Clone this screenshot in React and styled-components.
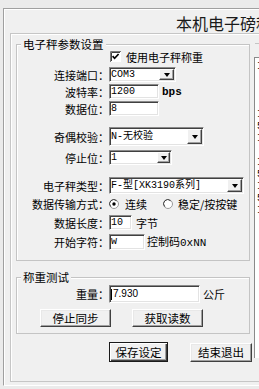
import React from 'react';
import styled, { createGlobalStyle } from 'styled-components';

const Global = createGlobalStyle`
  html, body { margin: 0; padding: 0; background: #ebebeb; }
  body {
    font-family: "Noto Sans CJK SC", "Liberation Sans", sans-serif;
    font-size: 11px;
    color: #000;
  }
  * { box-sizing: border-box; }
`;

const CJK = `"Noto Sans CJK SC", "Liberation Sans", sans-serif`;
const MONO = `"Liberation Mono", "Noto Sans CJK SC", monospace`;

const Screen = styled.div`
  width: 259px;
  height: 389px;
  overflow: hidden;
  padding: 8px 0 0 3px;
`;

const Window = styled.div`
  width: 330px;
  height: 378px;
  border-top: 1px solid #a0a0a0;
  border-left: 1px solid #a0a0a0;
  border-bottom: 1px solid #ffffff;
  border-right: 1px solid #ffffff;
  box-shadow: inset 1px 1px 0 #ffffff;
  background: #f0f0f0;
  padding: 6px 0 0 6px;
  display: flex;
  flex-direction: column;
`;

const Title = styled.div`
  height: 16px;
  line-height: 16px;
  font-size: 16px;
  padding-left: 166px;
  white-space: nowrap;
  color: #1a1a1a;
  font-family: ${CJK};
`;

const Panel = styled.div`
  margin-top: 2px;
  height: 349px;
  border: 1px solid #c6c6c6;
  box-shadow: inset 1px 1px 0 #ffffff;
  padding-left: 5px;
  display: flex;
  align-items: flex-start;
`;

const LeftCol = styled.div`
  width: 234px;
  flex: none;
  display: flex;
  flex-direction: column;
`;

const Group = styled.fieldset`
  margin: ${p => p.$mt}px 0 0 0;
  padding: 0 0 ${p => p.$pb}px 0;
  border: 1px solid #c4c4c4;
  box-shadow: inset 1px 1px 0 #ffffff;
  width: 234px;
  min-inline-size: 0;
  display: flex;
  flex-direction: column;
`;

const Legend = styled.legend`
  margin-left: 4px;
  padding: 0 2px;
  height: 14px;
  line-height: 14px;
  font-size: 11.5px;
  font-family: ${CJK};
  background: #f0f0f0;
`;

const Row = styled.div`
  display: flex;
  align-items: center;
  height: ${p => p.$h}px;
  margin-top: ${p => p.$mt}px;
  padding-left: ${p => p.$pl || 0}px;
  gap: ${p => p.$gap || 0}px;
  white-space: nowrap;
`;

const Label = styled.span`
  width: 92px;
  flex: none;
  text-align: right;
  font-size: 11px;
  line-height: 12px;
  font-family: ${CJK};
`;

const Text = styled.span`
  margin-left: ${p => p.$ml || 0}px;
  font-size: 11px;
  line-height: 12px;
  font-family: ${p => (p.$mono ? MONO : CJK)};
  font-weight: ${p => (p.$bold ? 700 : 400)};
`;

const Field = styled.div`
  width: ${p => p.$w}px;
  height: ${p => p.$h}px;
  flex: none;
  background: #ffffff;
  border-style: solid;
  border-width: 1px;
  border-color: #8a8a8a #ffffff #ffffff #8a8a8a;
  box-shadow: inset 1px 1px 0 #404040, inset -1px -1px 0 #e3e3e3;
  display: flex;
  align-items: stretch;
  overflow: hidden;
`;

const FieldText = styled.span`
  flex: 1;
  display: flex;
  align-items: center;
  padding-left: ${p => p.$pl ?? 2}px;
  font-family: ${p => (p.$sans ? `"Liberation Sans", sans-serif` : MONO)};
  font-size: 10px;
  line-height: 12px;
  white-space: nowrap;
`;

const Caret = styled.span`
  width: 1px;
  height: 11px;
  background: #000;
  margin-right: 1px;
`;

const DropBtn = styled.span`
  width: ${p => p.$w || 14}px;
  margin: 1px 1px 1px 0;
  flex: none;
  background: #f0f0f0;
  border: 1px solid;
  border-color: #ffffff #404040 #404040 #ffffff;
  box-shadow: inset -1px -1px 0 #a0a0a0;
  display: flex;
  align-items: center;
  justify-content: center;
`;

const Arrow = styled.span`
  width: 0;
  height: 0;
  border-left: 3.5px solid transparent;
  border-right: 3.5px solid transparent;
  border-top: 4px solid #000;
`;

const Button = styled.button`
  width: ${p => p.$w}px;
  height: ${p => p.$h}px;
  flex: none;
  padding: 0;
  margin: 0;
  font-family: ${CJK};
  font-size: 11.5px;
  line-height: 12px;
  color: #000;
  background: #f0f0f0;
  border: 1px solid;
  border-color: ${p => (p.$default ? '#1a1a1a' : '#ffffff #404040 #404040 #ffffff')};
  box-shadow: ${p =>
    p.$default
      ? 'inset 1px 1px 0 #ffffff, inset -1px -1px 0 #404040, inset -2px -2px 0 #a0a0a0'
      : 'inset -1px -1px 0 #a0a0a0, inset 1px 1px 0 #e8e8e8'};
`;

const RightCol = styled.div`
  margin-left: 4px;
  flex: none;
  width: 80px;
  display: flex;
  flex-direction: column;
`;

const RightRule = styled.div`
  margin: 9px 0 0 1px;
  border-top: 1px solid #c4c4c4;
`;

const ListBox = styled.div`
  margin-top: 13px;
  height: 301px;
  background: #ffffff;
  border-top: 1px solid #8a8a8a;
  border-left: 1px solid #8a8a8a;
  padding: 3px 0 0 2px;
  font-family: ${MONO};
  font-size: 10px;
  line-height: 12px;
  overflow: hidden;
  white-space: pre;
`;

const Check = () => (
  <svg width="11" height="11" viewBox="0 0 11 11" style={{ flex: 'none' }}>
    <rect x="0" y="0" width="11" height="11" fill="#fff" />
    <path d="M0.5 11V0.5H11" stroke="#7a7a7a" fill="none" />
    <path d="M1.5 10V1.5H10" stroke="#404040" fill="none" />
    <path d="M2.6 5.2L4.6 7.3L8.6 3" stroke="#000" strokeWidth="1.7" fill="none" />
  </svg>
);

const Radio = ({ on }) => (
  <svg width="10" height="10" viewBox="0 0 10 10" style={{ flex: 'none' }}>
    <circle cx="5" cy="5" r="4.5" fill="#fff" stroke="#9a9a9a" />
    <path d="M1.8 7.6A4 4 0 0 1 7.6 1.8" stroke="#404040" fill="none" />
    {on && <circle cx="5" cy="5" r="1.7" fill="#000" />}
  </svg>
);

const Select = ({ w, h, value, btn }) => (
  <Field $w={w} $h={h}>
    <FieldText $pl={1}>{value}</FieldText>
    <DropBtn $w={btn}>
      <Arrow />
    </DropBtn>
  </Field>
);

export default function App() {
  return (
    <>
      <Global />
      <Screen>
        <Window>
          <Title>本机电子磅秤参数设置</Title>
          <Panel>
            <LeftCol>
              <Group $mt={3} $pb={10}>
                <Legend>电子秤参数设置</Legend>
                <Row $h={13} $mt={-1} $pl={93}>
                  <Check />
                  <Text $ml={5}>使用电子秤称重</Text>
                </Row>
                <Row $h={15} $mt={4}>
                  <Label>连接端口：</Label>
                  <Select w={67} h={15} value="COM3" btn={15} />
                </Row>
                <Row $h={15} $mt={2}>
                  <Label>波特率：</Label>
                  <Field $w={50} $h={15}>
                    <FieldText $pl={1}>1200</FieldText>
                  </Field>
                  <Text $ml={3} $mono $bold>bps</Text>
                </Row>
                <Row $h={15} $mt={2}>
                  <Label>数据位：</Label>
                  <Field $w={50} $h={15}>
                    <FieldText $pl={1}>8</FieldText>
                  </Field>
                </Row>
                <Row $h={19} $mt={11}>
                  <Label>奇偶校验：</Label>
                  <Select w={95} h={19} value="N-无校验" btn={15} />
                </Row>
                <Row $h={15} $mt={4}>
                  <Label>停止位：</Label>
                  <Select w={63} h={15} value="1" btn={13} />
                </Row>
                <Row $h={17} $mt={12}>
                  <Label>电子秤类型：</Label>
                  <Select w={135} h={17} value="F-型[XK3190系列]" btn={15} />
                </Row>
                <Row $h={13} $mt={3}>
                  <Label>数据传输方式：</Label>
                  <Radio on />
                  <Text $ml={6}>连续</Text>
                  <span style={{ width: 16 }} />
                  <Radio />
                  <Text $ml={5}>稳定/按按键</Text>
                </Row>
                <Row $h={15} $mt={5}>
                  <Label>数据长度：</Label>
                  <Field $w={23} $h={15}>
                    <FieldText $pl={1}>10</FieldText>
                  </Field>
                  <Text $ml={4}>字节</Text>
                </Row>
                <Row $h={16} $mt={4}>
                  <Label>开始字符：</Label>
                  <Field $w={36} $h={16}>
                    <FieldText $pl={1}>w</FieldText>
                  </Field>
                  <Text $ml={2}>
                    控制码<Text $mono>0xNN</Text>
                  </Text>
                </Row>
              </Group>

              <Group $mt={9} $pb={6}>
                <Legend>称重测试</Legend>
                <Row $h={18} $mt={1}>
                  <Label>重量：</Label>
                  <Field $w={91} $h={18}>
                    <FieldText $pl={1} $sans>
                      <Caret />7.930
                    </FieldText>
                  </Field>
                  <Text $ml={3}>公斤</Text>
                </Row>
                <Row $h={18} $mt={6} $pl={23} $gap={21}>
                  <Button $w={71} $h={18}>停止同步</Button>
                  <Button $w={71} $h={18}>获取读数</Button>
                </Row>
              </Group>

              <Row $h={20} $mt={8} $pl={93} $gap={22}>
                <Button $w={59} $h={20} $default>保存设定</Button>
                <Button $w={62} $h={19}>结束退出</Button>
              </Row>
            </LeftCol>

            <RightCol>
              <RightRule />
              <ListBox>
                {'I  1\n\n\n\nI  5\n5  1\nI  2\n\nI  3\n5  2\nI  4\n5  3\nI  5\n'}
              </ListBox>
            </RightCol>
          </Panel>
        </Window>
      </Screen>
    </>
  );
}
